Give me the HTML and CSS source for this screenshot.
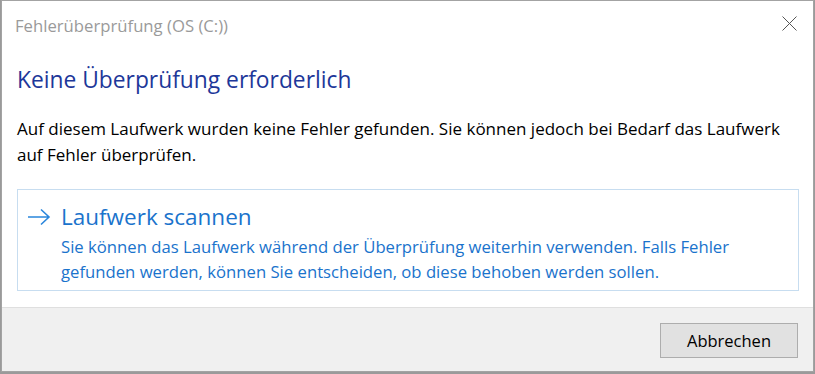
FILE: index.html
```html
<!DOCTYPE html>
<html lang="de">
<head>
<meta charset="utf-8">
<title>Fehlerüberprüfung</title>
<link rel="stylesheet" href="styles.css">
</head>
<body>
<div class="dialog">
  <div class="titlebar">
    <span class="title">Fehlerüberprüfung (OS (C:))</span>
    <svg class="close" width="15" height="15" viewBox="0 0 15 15"><path d="M0.5 0.5 L14.5 14.5 M14.5 0.5 L0.5 14.5" stroke="#555" stroke-width="1" fill="none"/></svg>
  </div>
  <div class="content">
    <h1 class="heading">Keine Überprüfung erforderlich</h1>
    <p class="body-text">Auf diesem Laufwerk wurden keine Fehler gefunden. Sie können jedoch bei Bedarf das Laufwerk auf Fehler überprüfen.</p>
    <div class="command">
      <div class="command-title">
        <svg class="arrow" width="24" height="18" viewBox="0 0 24 18"><path d="M1 9 H22 M14 1.5 L22 9 L14 16.5" stroke="#2a86dc" stroke-width="1.6" fill="none"/></svg>
        <span>Laufwerk scannen</span>
      </div>
      <p class="command-desc">Sie können das Laufwerk während der Überprüfung weiterhin verwenden. Falls Fehler gefunden werden, können Sie entscheiden, ob diese behoben werden sollen.</p>
    </div>
  </div>
  <div class="footer">
    <button class="btn">Abbrechen</button>
  </div>
</div>
</body>
</html>
```

FILE: styles.css
```css
html, body {
  margin: 0;
  padding: 0;
}
body {
  background: #9a9a9a;
  width: 815px;
  height: 374px;
  overflow: hidden;
  font-family: "Open Sans", "Noto Sans", sans-serif;
}
.dialog {
  margin-left: 1px;
  width: 811px;
  height: 370px;
  border: 1px solid #a3a3a3;
  background: #fff;
  display: flex;
  flex-direction: column;
}
.titlebar {
  height: 48px;
  flex-shrink: 0;
  display: flex;
  align-items: center;
  justify-content: space-between;
  padding: 0 16px 0 13px;
}
.title {
  color: #9a9a9a;
  font-size: 16.7px;
}
.close {
  margin-top: -3px;
}
.content {
  flex: 1;
  padding: 0 14px 0 15px;
}
.heading {
  margin: 15px 0 0;
  font-weight: normal;
  font-size: 22.8px;
  line-height: 32px;
  color: #1d3799;
}
.body-text {
  margin: 20px 0 0;
  font-size: 17px;
  line-height: 26px;
  color: #000;
}
.command {
  margin-top: 21px;
  border: 1px solid #c7ddf0;
  height: 102px;
  padding: 0 0 0 9px;
  box-sizing: border-box;
}
.command-title {
  display: flex;
  align-items: center;
  gap: 10px;
  margin-top: 12px;
  color: #1a73cc;
  font-size: 22.5px;
  line-height: 30px;
}
.command-desc {
  margin: 2px 0 0 34px;
  color: #1a73cc;
  font-size: 16.7px;
  line-height: 25px;
}
.footer {
  height: 64px;
  flex-shrink: 0;
  background: #f0f0f0;
  border-top: 1px solid #dfdfdf;
  display: flex;
  justify-content: flex-end;
  align-items: flex-start;
  padding: 15px 15px 0 0;
  box-sizing: border-box;
}
.btn {
  width: 138px;
  height: 35px;
  background: #e1e1e1;
  border: 1px solid #adadad;
  font-family: inherit;
  font-size: 16.5px;
  color: #000;
  padding: 0;
}
```
